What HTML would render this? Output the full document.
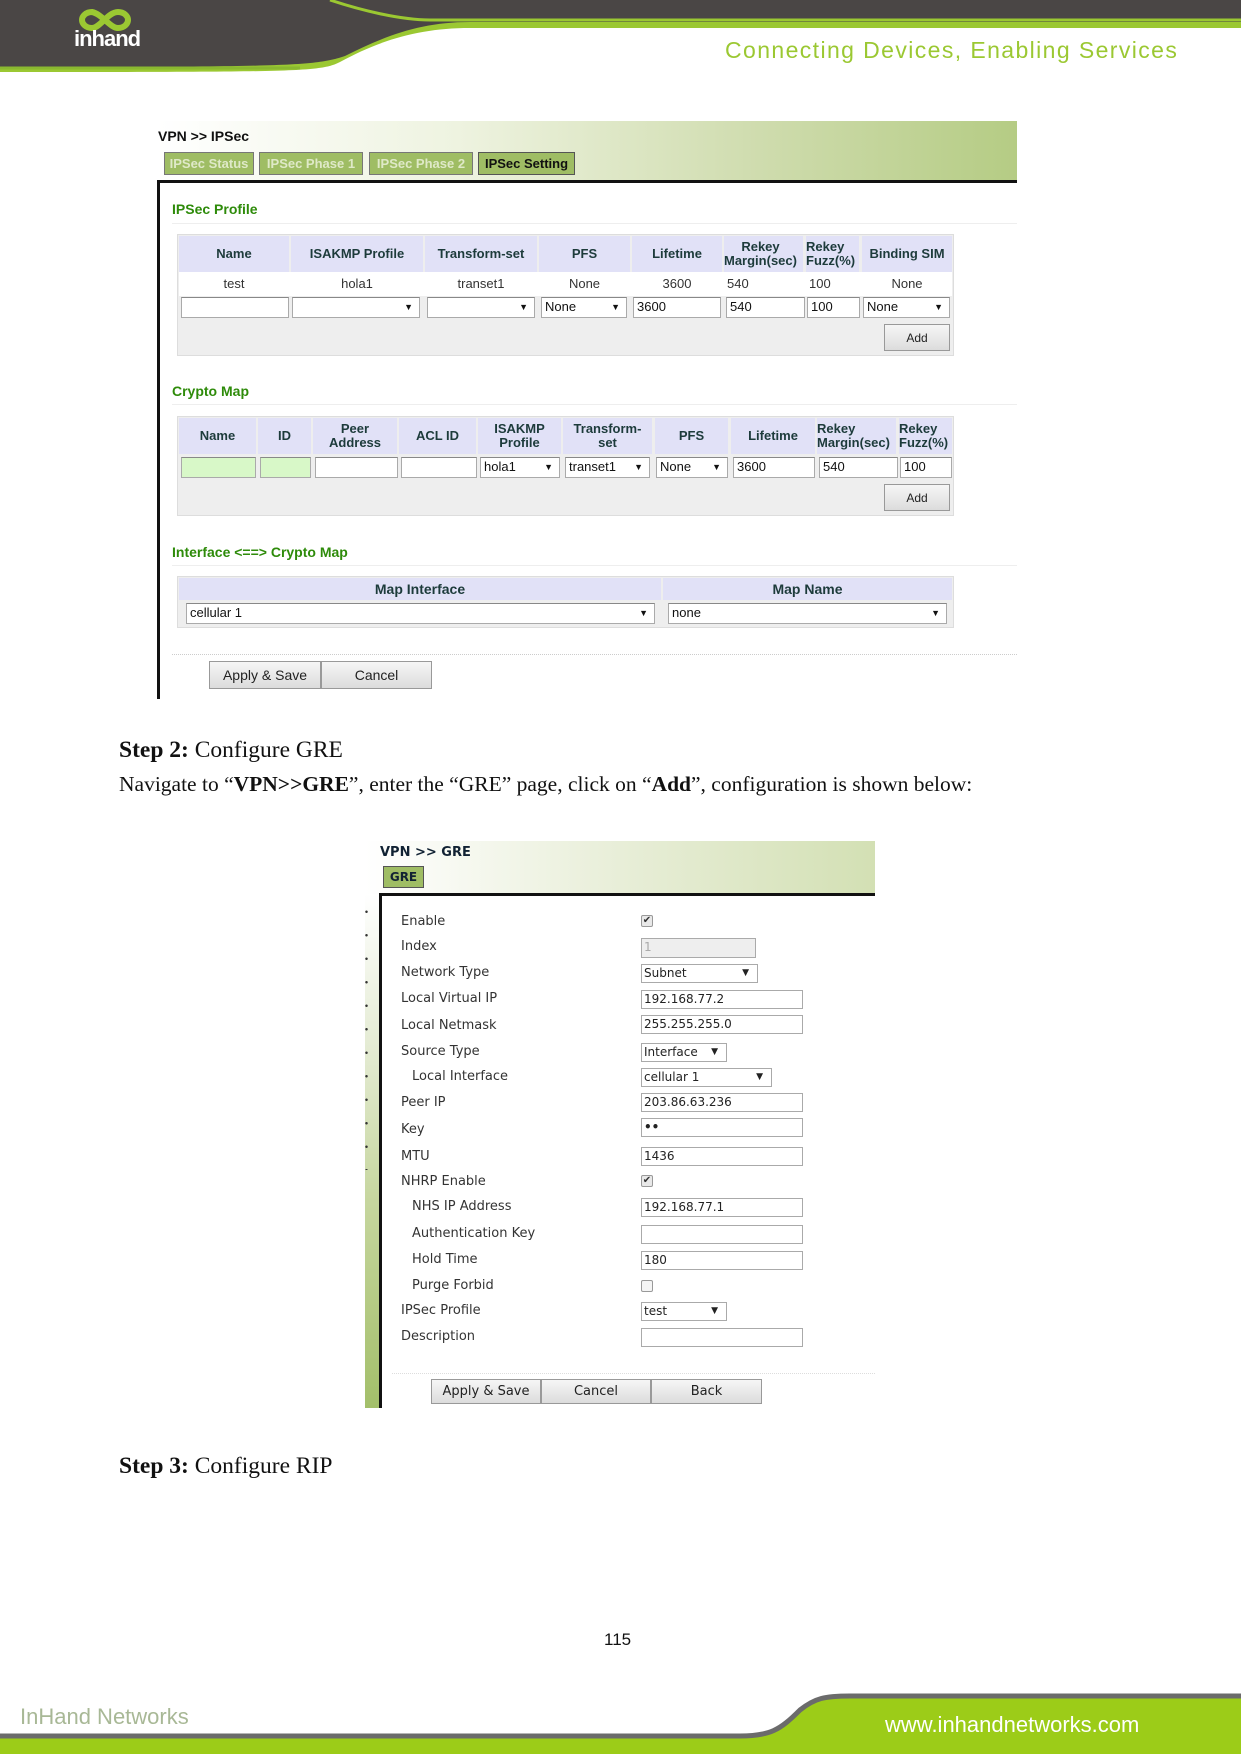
<!DOCTYPE html>
<html><head><meta charset="utf-8">
<style>
*{margin:0;padding:0;box-sizing:border-box}
body{width:1241px;height:1754px;position:relative;background:#fff;overflow:hidden;font-family:"Liberation Sans",sans-serif}
.a{position:absolute}
.t{position:absolute;white-space:nowrap}
.hd{position:absolute;background:#e1e1f7;color:#1d3b3b;font-weight:bold;font-size:13px;display:flex;align-items:center;justify-content:center;text-align:center;line-height:14px}
.in{position:absolute;background:#fff;border:1px solid #aaa;border-top-color:#888;font-size:13px;line-height:18px;padding-left:3px;color:#111}
.sel:after{content:"\25BC";position:absolute;right:6px;top:0;font-size:9px}
.btn{position:absolute;background:linear-gradient(#f6f6f6,#dcdcdc);border:1px solid #999;font-size:14px;display:flex;align-items:center;justify-content:center;color:#222}
.g{position:absolute;font-family:"DejaVu Sans",sans-serif;font-size:13px;color:#333;white-space:nowrap}
.gi{position:absolute;background:#fff;border:1px solid #aaa;font-family:"DejaVu Sans",sans-serif;font-size:12px;line-height:17px;padding-left:2px;color:#222}
.gs:after{content:"\25BC";position:absolute;right:8px;top:0;font-size:9px}
.cb{position:absolute;width:12px;height:12px;border:1px solid #999;border-radius:2px;background:#e8e8e8;font-size:10px;line-height:10px;text-align:center;color:#333}
.sec{position:absolute;color:#2e8b0a;font-weight:bold;font-size:14px}
.hr{position:absolute;height:1px;background:#eee}
.c{position:absolute;font-size:13px;color:#333;text-align:center}
</style></head><body>

<!-- header -->
<svg class="a" style="left:0;top:0" width="1241" height="75">
<path d="M0 0H1241V28H470C420 28 380 40 340 62C320 72 300 72 0 72Z" fill="#9bc832"/>
<path d="M0 0H1241V22H470C420 22 385 36 345 56C315 66 290 67 0 67Z" fill="#4a4645"/>
<path d="M330 0C360 10 400 20 430 20H1241" stroke="#9bc832" stroke-width="3" fill="none"/>
<path d="M0 68H300" stroke="#8ab830" stroke-width="3"/>
</svg>
<svg class="a" style="left:78;top:4" width="60" height="32" viewBox="0 0 60 32">
<path d="M14 8C8 8 4 12 4 16S8 24 14 24C22 24 30 8 40 8C46 8 50 12 50 16S46 24 40 24C32 24 24 10 14 8Z" fill="none" stroke="#9bc832" stroke-width="6"/>
</svg>
<div class="t" style="left:74px;top:26px;color:#fff;font-size:22px;font-weight:bold;letter-spacing:-1px">inhand</div>
<div class="t" style="left:725px;top:37px;color:#9bc832;font-size:23px;letter-spacing:1.4px">Connecting Devices, Enabling Services</div>

<!-- IPSec screenshot -->
<div class="a" style="left:157px;top:121px;width:860px;height:60px;background:linear-gradient(90deg,#fff 0%,#eef3e0 35%,#cfdcae 70%,#b5cc84 100%)"></div>
<div class="t" style="left:158px;top:128px;font-size:14px;font-weight:bold;color:#111">VPN &gt;&gt; IPSec</div>
<div class="a" style="left:164px;top:152px;width:90px;height:23px;background:#9fbd64;border:1px solid #777;color:#dfe9c8;font-size:13px;font-weight:bold;line-height:21px;text-align:center">IPSec Status</div>
<div class="a" style="left:259px;top:152px;width:104px;height:23px;background:#9fbd64;border:1px solid #777;color:#dfe9c8;font-size:13px;font-weight:bold;line-height:21px;text-align:center">IPSec Phase 1</div>
<div class="a" style="left:369px;top:152px;width:104px;height:23px;background:#9fbd64;border:1px solid #777;color:#dfe9c8;font-size:13px;font-weight:bold;line-height:21px;text-align:center">IPSec Phase 2</div>
<div class="a" style="left:478px;top:152px;width:97px;height:23px;background:#9fbd64;border:1px solid #555;color:#111;font-size:13px;font-weight:bold;line-height:21px;text-align:center">IPSec Setting</div>
<div class="a" style="left:157px;top:180px;width:860px;height:3px;background:#111"></div>
<div class="a" style="left:157px;top:180px;width:3px;height:519px;background:#111"></div>

<div class="sec" style="left:172px;top:201px">IPSec Profile</div>
<div class="hr" style="left:172px;top:223px;width:845px"></div>
<div class="a" style="left:177px;top:234px;width:777px;height:122px;background:#eee;border:1px solid #ddd"></div>
<div class="a" style="left:179px;top:272px;width:773px;height:24px;background:#fff"></div>
<div class="hd" style="left:179px;top:236px;width:110px;height:36px">Name</div>
<div class="hd" style="left:291px;top:236px;width:132px;height:36px">ISAKMP Profile</div>
<div class="hd" style="left:425px;top:236px;width:112px;height:36px">Transform-set</div>
<div class="hd" style="left:539px;top:236px;width:91px;height:36px">PFS</div>
<div class="hd" style="left:632px;top:236px;width:90px;height:36px">Lifetime</div>
<div class="hd" style="left:724px;top:236px;width:79px;height:36px;justify-content:flex-start">Rekey<br>Margin(sec)</div>
<div class="hd" style="left:806px;top:236px;width:53px;height:36px;justify-content:flex-start;text-align:left">Rekey<br>Fuzz(%)</div>
<div class="hd" style="left:862px;top:236px;width:90px;height:36px">Binding SIM</div>
<div class="c" style="left:179px;top:276px;width:110px">test</div>
<div class="c" style="left:291px;top:276px;width:132px">hola1</div>
<div class="c" style="left:425px;top:276px;width:112px">transet1</div>
<div class="c" style="left:539px;top:276px;width:91px">None</div>
<div class="c" style="left:632px;top:276px;width:90px">3600</div>
<div class="t" style="left:727px;top:276px;font-size:13px;color:#333">540</div>
<div class="t" style="left:809px;top:276px;font-size:13px;color:#333">100</div>
<div class="c" style="left:862px;top:276px;width:90px">None</div>
<div class="in" style="left:181px;top:297px;width:108px;height:21px"></div>
<div class="in sel" style="left:292px;top:297px;width:128px;height:21px"></div>
<div class="in sel" style="left:427px;top:297px;width:108px;height:21px"></div>
<div class="in sel" style="left:541px;top:297px;width:86px;height:21px">None</div>
<div class="in" style="left:633px;top:297px;width:88px;height:21px">3600</div>
<div class="in" style="left:726px;top:297px;width:79px;height:21px">540</div>
<div class="in" style="left:807px;top:297px;width:53px;height:21px">100</div>
<div class="in sel" style="left:863px;top:297px;width:87px;height:21px">None</div>
<div class="btn" style="left:884px;top:324px;width:66px;height:27px;font-size:12px">Add</div>

<div class="sec" style="left:172px;top:383px">Crypto Map</div>
<div class="hr" style="left:172px;top:404px;width:845px"></div>
<div class="a" style="left:177px;top:416px;width:777px;height:100px;background:#eee;border:1px solid #ddd"></div>
<div class="hd" style="left:179px;top:418px;width:77px;height:36px">Name</div>
<div class="hd" style="left:258px;top:418px;width:53px;height:36px">ID</div>
<div class="hd" style="left:313px;top:418px;width:84px;height:36px">Peer<br>Address</div>
<div class="hd" style="left:399px;top:418px;width:77px;height:36px">ACL ID</div>
<div class="hd" style="left:478px;top:418px;width:83px;height:36px">ISAKMP<br>Profile</div>
<div class="hd" style="left:563px;top:418px;width:89px;height:36px">Transform-<br>set</div>
<div class="hd" style="left:655px;top:418px;width:73px;height:36px">PFS</div>
<div class="hd" style="left:731px;top:418px;width:84px;height:36px">Lifetime</div>
<div class="hd" style="left:817px;top:418px;width:79px;height:36px;justify-content:flex-start;text-align:left">Rekey<br>Margin(sec)</div>
<div class="hd" style="left:899px;top:418px;width:53px;height:36px;justify-content:flex-start;text-align:left">Rekey<br>Fuzz(%)</div>
<div class="in" style="left:181px;top:457px;width:75px;height:21px;background:#d8f8c8"></div>
<div class="in" style="left:260px;top:457px;width:51px;height:21px;background:#d8f8c8"></div>
<div class="in" style="left:315px;top:457px;width:83px;height:21px"></div>
<div class="in" style="left:401px;top:457px;width:76px;height:21px"></div>
<div class="in sel" style="left:480px;top:457px;width:80px;height:21px">hola1</div>
<div class="in sel" style="left:565px;top:457px;width:85px;height:21px">transet1</div>
<div class="in sel" style="left:656px;top:457px;width:72px;height:21px">None</div>
<div class="in" style="left:733px;top:457px;width:82px;height:21px">3600</div>
<div class="in" style="left:819px;top:457px;width:79px;height:21px">540</div>
<div class="in" style="left:900px;top:457px;width:52px;height:21px">100</div>
<div class="btn" style="left:884px;top:484px;width:66px;height:27px;font-size:12px">Add</div>

<div class="sec" style="left:172px;top:544px">Interface &lt;==&gt; Crypto Map</div>
<div class="hr" style="left:172px;top:565px;width:845px"></div>
<div class="a" style="left:177px;top:576px;width:777px;height:52px;background:#eee;border:1px solid #ddd"></div>
<div class="hd" style="left:179px;top:578px;width:482px;height:22px;font-size:14px">Map Interface</div>
<div class="hd" style="left:663px;top:578px;width:289px;height:22px;font-size:14px">Map Name</div>
<div class="in sel" style="left:186px;top:603px;width:469px;height:21px">cellular 1</div>
<div class="in sel" style="left:668px;top:603px;width:279px;height:21px">none</div>
<div class="a" style="left:172px;top:654px;width:845px;border-top:1px dotted #ccc"></div>
<div class="btn" style="left:209px;top:661px;width:112px;height:28px">Apply &amp; Save</div>
<div class="btn" style="left:321px;top:661px;width:111px;height:28px">Cancel</div>

<!-- text -->
<div class="t" style="left:119px;top:737px;font-family:'Liberation Serif',serif;font-size:23.5px;color:#111"><b>Step 2:</b> Configure GRE</div>
<div class="t" style="left:119px;top:772px;font-family:'Liberation Serif',serif;font-size:21.5px;color:#111">Navigate to “<b>VPN&gt;&gt;GRE</b>”, enter the “GRE” page, click on “<b>Add</b>”, configuration is shown below:</div>

<!-- GRE screenshot -->
<div class="a" style="left:365px;top:841px;width:510px;height:53px;background:linear-gradient(90deg,#fff 0%,#e8eed8 50%,#d3e0b4 100%)"></div>
<div class="t" style="left:380px;top:845px;font-family:'DejaVu Sans',sans-serif;font-size:13px;font-weight:bold;color:#123">VPN &gt;&gt; GRE</div>
<div class="a" style="left:383px;top:866px;width:41px;height:22px;background:#9fbd64;border:1px solid #555;font-family:'DejaVu Sans',sans-serif;font-size:12px;font-weight:bold;color:#123;line-height:20px;text-align:center">GRE</div>
<div class="a" style="left:365px;top:894px;width:15px;height:514px;background:linear-gradient(#fff 0%,#e4ebd3 30%,#c6d69e 60%,#a3bf6a 100%)"></div>
<div class="a" style="left:379px;top:893px;width:496px;height:3px;background:#111"></div>
<div class="a" style="left:379px;top:893px;width:3px;height:515px;background:#111"></div>
<div class="a" style="left:365px;top:900px;width:3px;height:270px;background:radial-gradient(circle,#333 1px,transparent 1.5px) 0 0/3px 23.5px repeat-y"></div>

<div class="g" style="left:401px;top:914px">Enable</div>
<div class="g" style="left:401px;top:939px">Index</div>
<div class="g" style="left:401px;top:965px">Network Type</div>
<div class="g" style="left:401px;top:991px">Local Virtual IP</div>
<div class="g" style="left:401px;top:1018px">Local Netmask</div>
<div class="g" style="left:401px;top:1044px">Source Type</div>
<div class="g" style="left:412px;top:1069px">Local Interface</div>
<div class="g" style="left:401px;top:1095px">Peer IP</div>
<div class="g" style="left:401px;top:1122px">Key</div>
<div class="g" style="left:401px;top:1149px">MTU</div>
<div class="g" style="left:401px;top:1174px">NHRP Enable</div>
<div class="g" style="left:412px;top:1199px">NHS IP Address</div>
<div class="g" style="left:412px;top:1226px">Authentication Key</div>
<div class="g" style="left:412px;top:1252px">Hold Time</div>
<div class="g" style="left:412px;top:1278px">Purge Forbid</div>
<div class="g" style="left:401px;top:1303px">IPSec Profile</div>
<div class="g" style="left:401px;top:1329px">Description</div>

<div class="cb" style="left:641px;top:915px">✔</div>
<div class="gi" style="left:641px;top:938px;width:115px;height:20px;background:#eee;color:#aaa">1</div>
<div class="gi gs" style="left:641px;top:964px;width:117px;height:19px">Subnet</div>
<div class="gi" style="left:641px;top:990px;width:162px;height:19px">192.168.77.2</div>
<div class="gi" style="left:641px;top:1015px;width:162px;height:19px">255.255.255.0</div>
<div class="gi gs" style="left:641px;top:1043px;width:86px;height:19px">Interface</div>
<div class="gi gs" style="left:641px;top:1068px;width:131px;height:19px">cellular 1</div>
<div class="gi" style="left:641px;top:1093px;width:162px;height:19px">203.86.63.236</div>
<div class="gi" style="left:641px;top:1118px;width:162px;height:19px;font-weight:bold">••</div>
<div class="gi" style="left:641px;top:1147px;width:162px;height:19px">1436</div>
<div class="cb" style="left:641px;top:1175px">✔</div>
<div class="gi" style="left:641px;top:1198px;width:162px;height:19px">192.168.77.1</div>
<div class="gi" style="left:641px;top:1225px;width:162px;height:19px"></div>
<div class="gi" style="left:641px;top:1251px;width:162px;height:19px">180</div>
<div class="cb" style="left:641px;top:1280px;background:#f4f4f4"></div>
<div class="gi gs" style="left:641px;top:1302px;width:86px;height:19px">test</div>
<div class="gi" style="left:641px;top:1328px;width:162px;height:19px"></div>
<div class="a" style="left:392px;top:1373px;width:483px;border-top:1px dotted #ddd"></div>
<div class="btn" style="left:431px;top:1379px;width:110px;height:25px;font-family:'DejaVu Sans',sans-serif;font-size:13px">Apply &amp; Save</div>
<div class="btn" style="left:541px;top:1379px;width:110px;height:25px;font-family:'DejaVu Sans',sans-serif;font-size:13px">Cancel</div>
<div class="btn" style="left:651px;top:1379px;width:111px;height:25px;font-family:'DejaVu Sans',sans-serif;font-size:13px">Back</div>

<div class="t" style="left:119px;top:1453px;font-family:'Liberation Serif',serif;font-size:23.5px;color:#111"><b>Step 3:</b> Configure RIP</div>
<div class="t" style="left:604px;top:1630px;font-size:17px;color:#111">115</div>

<!-- footer -->
<svg class="a" style="left:0;top:1690px" width="1241" height="64">
<path d="M0 46H740C770 46 780 40 800 20C815 8 825 6 850 6H1241V64H0Z" fill="#9ccc18"/>
<path d="M0 46H740C770 46 780 40 800 20C815 8 825 6 850 6H1241" stroke="#6b6b6b" stroke-width="5" fill="none"/>
</svg>
<div class="t" style="left:20px;top:1704px;font-size:22px;color:#a8b896">InHand Networks</div>
<div class="t" style="left:885px;top:1712px;font-size:22px;color:#fff">www.inhandnetworks.com</div>
</body></html>
